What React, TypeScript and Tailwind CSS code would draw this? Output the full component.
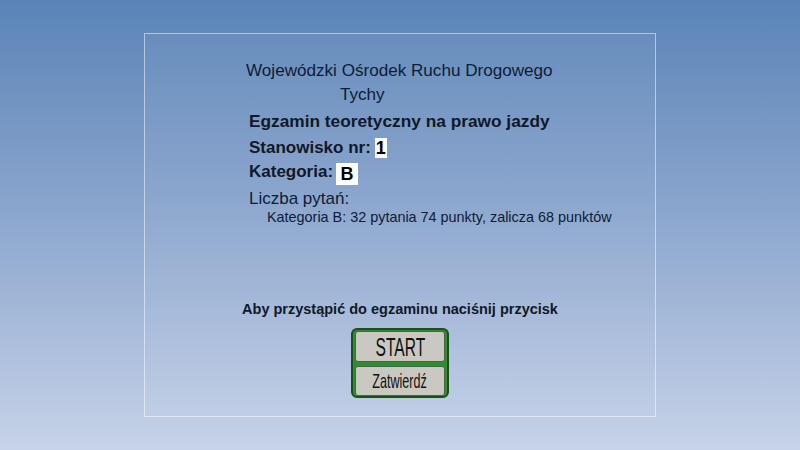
import React from 'react';

const font = { fontFamily: '"Liberation Sans", Arial, sans-serif' };

const ValueBox: React.FC<{ children: React.ReactNode; className?: string }> = ({ children, className = '' }) => (
  <span className={`inline-block bg-white text-black font-bold ${className}`}>{children}</span>
);

const ExamButton: React.FC<{ label: string; className: string; textClass: string }> = ({ label, className, textClass }) => (
  <button
    className={`w-full flex items-center justify-center bg-[#c9c9c2] border border-[#46664a] rounded-[3px] text-[#111] ${className}`}
  >
    <span className={`inline-block scale-x-[0.6] ${textClass}`}>{label}</span>
  </button>
);

export default function App() {
  return (
    <div
      className="min-h-screen w-full flex items-start justify-center bg-gradient-to-b from-[#5a84b7] via-[#8ea8cf] to-[#c7d3e8] pt-[33px]"
      style={font}
    >
      <div className="w-[512px] h-[384px] border border-white/50 bg-white/[0.04] text-[#0e1b38]">
        {/* header + exam info */}
        <div className="pt-[25px] pl-[101px]">
          <div className="text-[17.1px] leading-[24px]">Wojewódzki Ośrodek Ruchu Drogowego</div>
          <div className="text-[17.1px] leading-[24px] pl-[94px]">Tychy</div>
          <div className="mt-[2px] ml-[3px] text-[17.3px] leading-[24px] font-bold text-[#111827]">
            Egzamin teoretyczny na prawo jazdy
          </div>
          <div className="mt-[3px] ml-[3px] h-[24px] flex items-center text-[17px] font-bold text-[#111827]">
            <span>Stanowisko nr:</span>
            <ValueBox className="ml-[4px] h-[20px] leading-[20px] px-[1px] text-[18px]">1</ValueBox>
          </div>
          <div className="ml-[3px] h-[24px] flex items-center text-[17px] font-bold text-[#111827]">
            <span>Kategoria:</span>
            <ValueBox className="ml-[3px] mt-[4px] h-[22px] leading-[22px] w-[22px] text-center text-[18px]">B</ValueBox>
          </div>
          <div className="mt-[5px] ml-[3px] text-[17px] leading-[20px]">Liczba pytań:</div>
          <div className="ml-[21px] text-[14.4px] leading-[16px]">
            Kategoria B: 32 pytania 74 punkty, zalicza 68 punktów
          </div>
        </div>

        {/* start section */}
        <div className="mt-[74px] flex flex-col items-center">
          <div className="text-[14.5px] leading-[20px] font-bold text-[#111827]">
            Aby przystąpić do egzaminu naciśnij przycisk
          </div>
          <div className="mt-[9px] w-[98px] border-2 border-[#1d4f1d] bg-[#2f8c2f] rounded-[6px] pt-[1px] px-[2px] flex flex-col gap-[4px]">
            <ExamButton label="START" className="h-[31px]" textClass="text-[26px] leading-[26px]" />
            <ExamButton label="Zatwierdź" className="h-[30px]" textClass="text-[21px] leading-[22px]" />
          </div>
        </div>
      </div>
    </div>
  );
}
